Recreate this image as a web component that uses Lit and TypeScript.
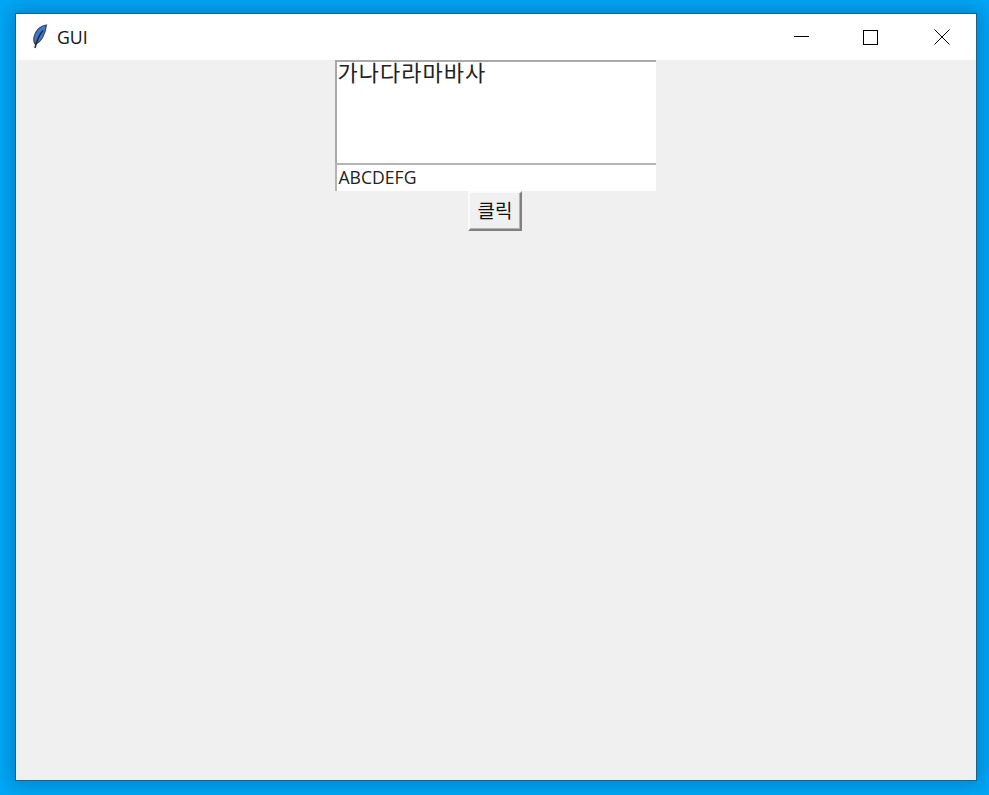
import { LitElement, html, css } from "lit";
import { customElement } from "lit/decorators.js";

@customElement("app-root")
export class AppRoot extends LitElement {
  static styles = css`
    :host { display: block; width: 989px; height: 795px; overflow: hidden; }
    .desktop { box-sizing: border-box; width: 989px; height: 795px; padding: 13px 12px 14px 15px; background: #00a8f6; display: flex; font-family: "Noto Sans CJK KR", "Open Sans", sans-serif; }
    .win { flex: 1; display: flex; flex-direction: column; border: 1px solid #1c6288; box-shadow: 0 0 18px 4px rgba(0, 70, 140, 0.38); background: #f0f0f0; }
    .title { height: 46px; flex: none; background: #fff; display: flex; align-items: center; }
    .feather { margin-left: 15px; width: 18px; height: 26px; flex: none; }
    .name { margin-left: 8px; font: 17.7px "Open Sans", "Noto Sans", sans-serif; color: #111; }
    .controls { margin-left: auto; display: flex; height: 46px; padding-right: 1px; }
    .ctl { display: flex; align-items: center; justify-content: center; }
    .min { width: 63px; }
    .max { width: 75px; }
    .close { width: 67px; }
    .client { flex: 1; display: flex; flex-direction: column; align-items: center; padding-right: 2px; }
    .text { box-sizing: border-box; width: 321px; height: 103px; background: #fff; border-top: 2px solid #a9a9a9; border-left: 2px solid #a9a9a9; font-size: 22px; letter-spacing: 1px; line-height: 18px; padding-left: 1px; color: #222; white-space: nowrap; }
    .entry { box-sizing: border-box; width: 321px; height: 28px; background: #fff; border-top: 2px solid #b4b4b4; border-left: 2px solid #b4b4b4; font: 17.6px/24px "Open Sans", sans-serif; color: #222; padding-left: 2px; }
    .btn { box-sizing: border-box; width: 54px; height: 40px; background: #f0f0f0; border: 2px solid; border-color: #fbfbfb #808080 #808080 #fbfbfb; box-shadow: inset -1px -1px 0 #b4b4b4; padding-bottom: 3px; font-size: 19px; color: #111; display: flex; align-items: center; justify-content: center; }
  `;
  render() {
    return html`<div class="desktop"><div class="win">
      <div class="title">
        <svg class="feather" viewBox="0 0 18 26">
          <path d="M15.5 1 C9.5 1.5 4 7 3 13 C2.5 16.5 3 19 4.5 20.5 C9.5 18 14 11 15.5 1Z" fill="#3a78d8" stroke="#3a4452" stroke-width="1.2"/>
          <path d="M12 6.5 C9 10 6 15 4 24" fill="none" stroke="#20262e" stroke-width="1.5"/>
        </svg>
        <span class="name">GUI</span>
        <div class="controls">
          <div class="ctl min"><svg width="15" height="15"><path d="M0 6.5H15" stroke="#000"/></svg></div>
          <div class="ctl max"><svg width="15" height="15"><rect x=".5" y=".5" width="14" height="14" fill="none" stroke="#000"/></svg></div>
          <div class="ctl close"><svg width="16" height="16"><path d="M.5 .5L15.5 15.5M15.5 .5L.5 15.5" stroke="#000"/></svg></div>
        </div>
      </div>
      <div class="client">
        <div class="text">가나다라마바사</div>
        <div class="entry">ABCDEFG</div>
        <div class="btn">클릭</div>
      </div>
    </div></div>`;
  }
}
